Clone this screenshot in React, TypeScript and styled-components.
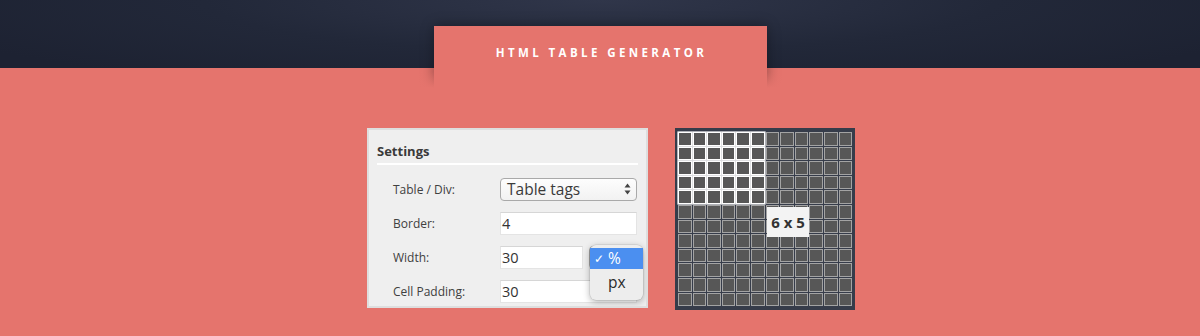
import React from 'react';
import styled, { createGlobalStyle } from 'styled-components';

const PINK = '#e5746d';

const GlobalStyle = createGlobalStyle`
    html, body {
        margin: 0;
        padding: 0;
        background: ${PINK};
        font-family: "Open Sans", "Liberation Sans", sans-serif;
    }
`;

const StyledHeader = styled.header`
    height: 68px;
    background: radial-gradient(ellipse 60% 140% at 50% 0%, #30364a 0%, #222839 55%, #1d2232 100%);
    display: flex;
    justify-content: center;
    align-items: flex-start;
    padding-top: 26px;
    box-sizing: border-box;
`;

const StyledTab = styled.div`
    position: relative;
    width: 333px;
    height: 68px;
    background: ${PINK};
    box-shadow: 0 0 12px rgba(0, 0, 0, 0.35);
    text-align: center;
    padding-top: 19px;
    box-sizing: border-box;
    z-index: 1;

    &::after {
        content: '';
        position: absolute;
        left: -24px;
        right: -24px;
        top: 46px;
        height: 40px;
        background: linear-gradient(to bottom, rgba(229, 116, 109, 0) 0%, ${PINK} 40%);
    }
`;

const StyledTitle = styled.h1`
    margin: 0;
    color: #fff;
    font-size: 11.5px;
    line-height: 16px;
    font-weight: 700;
    letter-spacing: 3.4px;
    padding-left: 3px;
`;

const StyledMain = styled.main`
    display: flex;
    justify-content: center;
    align-items: flex-start;
    gap: 27px;
    padding: 60px 0 0 22px;
`;

const StyledSettings = styled.section`
    width: 281px;
    height: 180px;
    box-sizing: border-box;
    border: 2px solid #dedede;
    background: #efefef;
    padding: 11px 8px 0 8px;
    overflow: hidden;
`;

const StyledHeading = styled.div`
    font-size: 13px;
    font-weight: 700;
    color: #3a3a3a;
    line-height: 20px;
    padding-bottom: 2px;
    border-bottom: 2px solid #fff;
    margin-bottom: 7px;
`;

const StyledRow = styled.div`
    display: grid;
    grid-template-columns: 107px 1fr;
    align-items: center;
    height: 34px;
    padding-left: 16px;
`;

const StyledLabel = styled.label`
    font-size: 12px;
    color: #404040;
`;

const StyledInput = styled.div<{ $width?: number }>`
    width: ${p => (p.$width ? `${p.$width}px` : '137px')};
    height: 23px;
    box-sizing: border-box;
    background: #fff;
    border: 1px solid #e4e4e4;
    border-top-color: #d6d6d6;
    font-size: 14.5px;
    line-height: 21px;
    padding-left: 1px;
    color: #333;
`;

const StyledSelect = styled.div<{ $width?: number }>`
    position: relative;
    width: ${p => (p.$width ? `${p.$width}px` : '137px')};
    height: 23px;
    box-sizing: border-box;
    border: 1px solid #a9a9a9;
    border-radius: 4px;
    background: linear-gradient(#fdfdfd, #f2f2f2);
    font-size: 15.5px;
    line-height: 21px;
    padding-left: 6px;
    color: #3a3a3a;
    display: flex;
    align-items: center;
    justify-content: space-between;
    padding-right: 5px;
`;

const StyledWidthCell = styled.div`
    display: flex;
    gap: 6px;
    align-items: center;
`;

const StyledUnitWrap = styled.div`
    position: relative;
`;

const StyledPopup = styled.ul`
    position: absolute;
    left: 1px;
    top: -1px;
    width: 53px;
    margin: 0;
    padding: 3px 0 4px;
    list-style: none;
    background: #ededed;
    border-radius: 6px;
    box-shadow: 0 2px 7px rgba(0, 0, 0, 0.3), 0 0 0 0.5px rgba(0, 0, 0, 0.12);
    z-index: 2;
`;

const StyledOption = styled.li<{ $active?: boolean }>`
    height: 21px;
    line-height: 21px;
    font-size: 15.5px;
    padding-left: 18px;
    position: relative;
    color: ${p => (p.$active ? '#fff' : '#2a2a2a')};
    background: ${p => (p.$active ? '#4b8ff0' : 'transparent')};
    margin-bottom: 3px;
`;

const StyledCheck = styled.span`
    position: absolute;
    left: 4px;
    top: 0;
    font-size: 12px;
`;

const StyledPanel = styled.div`
    position: relative;
    width: 180px;
    height: 182px;
    box-sizing: border-box;
    background: #363c4a;
    padding: 4px 3px;
    display: grid;
    grid-template-columns: repeat(12, 13.6px);
    grid-auto-rows: 13.6px;
    gap: 1px;
`;

const StyledCell = styled.div<{ $selected: boolean }>`
    box-sizing: border-box;
    background: #575757;
    border: 1px solid ${p => (p.$selected ? '#ffffff' : '#a3a3a3')};
    box-shadow: ${p => (p.$selected ? '0 0 0 0.6px #ffffff' : 'none')};
    z-index: ${p => (p.$selected ? 1 : 0)};
`;

const StyledSize = styled.div`
    position: absolute;
    left: 92px;
    top: 79px;
    width: 42px;
    height: 30px;
    background: #f3f3f3;
    color: #333;
    font-size: 15px;
    font-weight: 700;
    line-height: 30px;
    text-align: center;
    z-index: 3;
`;

function SelectArrows() {
    return (
        <svg width="7" height="12" viewBox="0 0 7 12">
            <path d="M3.5 0.5 L6.5 4.5 L0.5 4.5 Z" fill="#444" />
            <path d="M3.5 11.5 L6.5 7.5 L0.5 7.5 Z" fill="#444" />
        </svg>
    );
}

const COLS = 12;
const ROWS = 12;
const SEL_COLS = 6;
const SEL_ROWS = 5;

export default function App() {
    const cells = [];
    for (let r = 0; r < ROWS; r++) {
        for (let c = 0; c < COLS; c++) {
            cells.push(<StyledCell key={`${r}-${c}`} $selected={r < SEL_ROWS && c < SEL_COLS} />);
        }
    }

    return (
        <>
            <GlobalStyle />
            <StyledHeader>
                <StyledTab>
                    <StyledTitle>HTML TABLE GENERATOR</StyledTitle>
                </StyledTab>
            </StyledHeader>
            <StyledMain>
                <StyledSettings>
                    <StyledHeading>Settings</StyledHeading>
                    <StyledRow>
                        <StyledLabel>Table / Div:</StyledLabel>
                        <StyledSelect>
                            <span>Table tags</span>
                            <SelectArrows />
                        </StyledSelect>
                    </StyledRow>
                    <StyledRow>
                        <StyledLabel>Border:</StyledLabel>
                        <StyledInput>4</StyledInput>
                    </StyledRow>
                    <StyledRow>
                        <StyledLabel>Width:</StyledLabel>
                        <StyledWidthCell>
                            <StyledInput $width={83}>30</StyledInput>
                            <StyledUnitWrap>
                                <StyledSelect $width={48} aria-hidden="true" />
                                <StyledPopup>
                                    <StyledOption $active>
                                        <StyledCheck>✓</StyledCheck>%
                                    </StyledOption>
                                    <StyledOption>px</StyledOption>
                                </StyledPopup>
                            </StyledUnitWrap>
                        </StyledWidthCell>
                    </StyledRow>
                    <StyledRow>
                        <StyledLabel>Cell Padding:</StyledLabel>
                        <StyledInput>30</StyledInput>
                    </StyledRow>
                </StyledSettings>
                <StyledPanel>
                    {cells}
                    <StyledSize>6 x 5</StyledSize>
                </StyledPanel>
            </StyledMain>
        </>
    );
}
